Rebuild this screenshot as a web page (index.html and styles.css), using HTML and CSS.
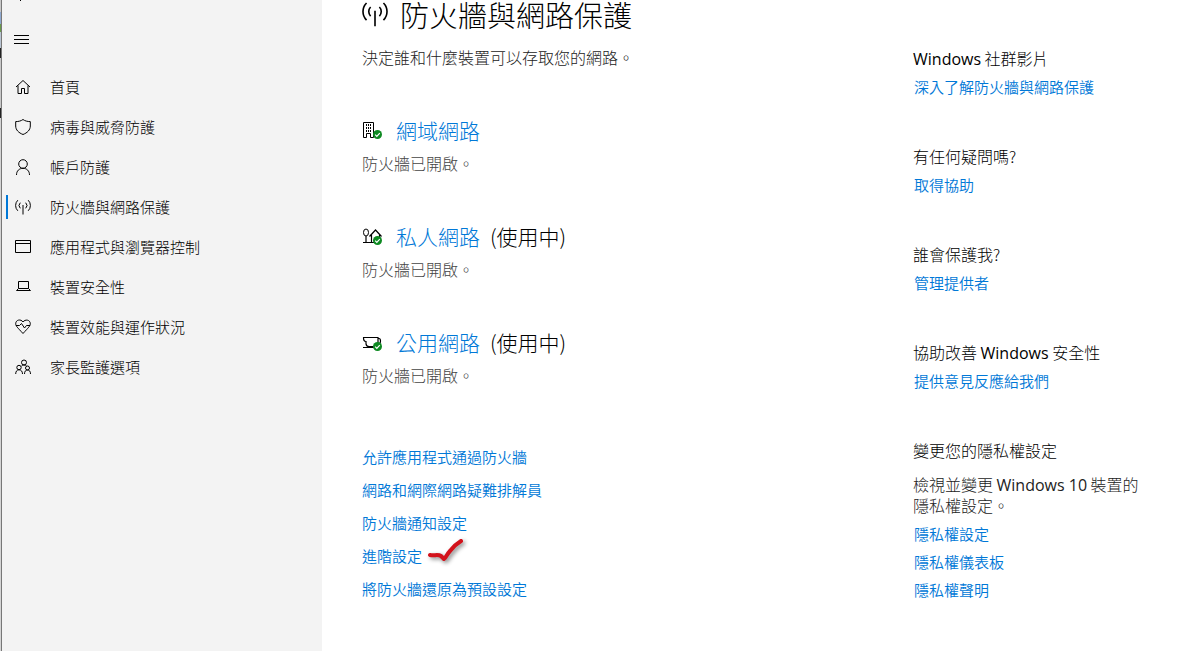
FILE: index.html
```html
<!DOCTYPE html>
<html lang="zh-Hant">
<head>
<meta charset="utf-8">
<title>防火牆與網路保護</title>
<link rel="stylesheet" href="styles.css">
</head>
<body>
<svg width="0" height="0" class="defs" aria-hidden="true">
  <symbol id="signal" viewBox="0 0 16 16"><path d="M8 6v9.500M5.300 3.700a4 4 0 0 0 0 5.600M10.700 3.700a4 4 0 0 1 0 5.600M2.800 1.200a7.500 7.500 0 0 0 0 10.600M13.200 1.200a7.500 7.500 0 0 1 0 10.600"/></symbol>
  <symbol id="ok" viewBox="0 0 9 9"><circle cx="4.500" cy="4.500" r="4.500" fill="#0e8a22" stroke="none"/><path d="M2.200 4.700l1.600 1.600 3-3.200" stroke="#fff" stroke-width="1.200"/></symbol>
</svg>
<div class="app">
  <div class="edge"></div>
  <nav class="sidebar">
    <button class="back" aria-label="返回"><svg width="16" height="16" viewBox="0 0 16 16"><path d="M15 8H1M8 1L1 8l7 7"/></svg></button>
    <button class="menu" aria-label="功能表"><svg width="16" height="16" viewBox="0 0 16 16"><path d="M0 3.500h15M0 7.500h15M0 11.500h15"/></svg></button>
    <ul class="nav">
      <li><a href="#"><svg viewBox="0 0 16 16"><path d="M1 8L8 1.500 15 8M3 6.500v8h3.500V9.500h3v5H13v-8"/></svg>首頁</a></li>
      <li><a href="#"><svg viewBox="0 0 16 16"><path d="M8 .5C6 2 3.500 2.600.7 2.600V7c0 4 3 6.800 7.300 8.500 4.300-1.700 7.300-4.500 7.300-8.500V2.600C12.500 2.600 10 2 8 .5z"/></svg>病毒與威脅防護</a></li>
      <li><a href="#"><svg viewBox="0 0 16 16"><circle cx="8" cy="5" r="4.300"/><path d="M1.500 16c0-4 2.600-6.700 6.500-6.700s6.500 2.700 6.500 6.700"/></svg>帳戶防護</a></li>
      <li class="current"><a href="#" aria-current="page"><svg><use href="#signal"/></svg>防火牆與網路保護</a></li>
      <li><a href="#"><svg viewBox="0 0 16 16"><path d="M.5 1.500h15v12H.5zM.5 4.500h15"/></svg>應用程式與瀏覽器控制</a></li>
      <li><a href="#"><svg viewBox="0 0 16 16"><path d="M3.500 2.500h10v7h-10zM3.500 9.500l-2 2h14l-2-2"/></svg>裝置安全性</a></li>
      <li><a href="#"><svg viewBox="0 0 16 16"><path d="M8 3C6-.2.700.5.700 4.800.700 7 2.500 8.500 8 14.500c5.500-6 7.300-7.500 7.300-9.700C15.300.5 10 0 8 3zM1 6.500h3.500l2-2 3 4.500 2-2.500H15"/></svg>裝置效能與運作狀況</a></li>
      <li><a href="#"><svg viewBox="0 0 16 16"><circle cx="9" cy="3.500" r="2.500"/><circle cx="4" cy="8.500" r="2.200"/><circle cx="12.500" cy="9" r="2"/><path d="M.7 15c0-2.700 1.300-4.200 3.300-4.200S7.500 12.300 7.500 15M9.500 15c0-2.500 1-4 3-4s3 1.500 3 4M6.300 7.300C7 6.300 8 6 9 6s2 .4 2.500 1"/></svg>家長監護選項</a></li>
    </ul>
  </nav>
  <main class="content">
    <h1><svg width="26" height="26"><use href="#signal"/></svg>防火牆與網路保護</h1>
    <p class="intro">決定誰和什麼裝置可以存取您的網路。</p>
    <section class="network">
      <h2><svg width="20" height="20" viewBox="0 0 20 20"><path d="M1.500 17.500v-15h10v15h-3v-4h-4v4z"/><path d="M4.500 4v8M6.500 4v8M8.500 4v8" stroke-dasharray="2 1"/><use href="#ok" x="11" y="10" width="9" height="9"/></svg><a href="#">網域網路</a></h2>
      <p>防火牆已開啟。</p>
    </section>
    <section class="network">
      <h2><svg width="20" height="20" viewBox="0 0 20 20"><ellipse cx="4" cy="6.500" rx="2.500" ry="3.500"/><path d="M4 10v6M1 16.500h10M7.500 10.500L13.500 4l6 6.500M9.500 9v7.500h8V9" stroke-width="1.200"/><use href="#ok" x="11" y="10" width="9" height="9"/></svg><a href="#">私人網路</a><span>(使用中)</span></h2>
      <p>防火牆已開啟。</p>
    </section>
    <section class="network">
      <h2><svg width="20" height="20" viewBox="0 0 20 20"><path d="M1 5.500h15v6c0 2-1 3-3 3H7c-2 0-3-1-3-3v-2C2 9.500 1.500 8 1.500 5.500M16 6.500h1c2 0 2 5 0 5h-1M1 15.500h12" stroke-width="1.200"/><use href="#ok" x="11" y="10" width="9" height="9"/></svg><a href="#">公用網路</a><span>(使用中)</span></h2>
      <p>防火牆已開啟。</p>
    </section>
    <ul class="actions">
      <li><a href="#">允許應用程式通過防火牆</a></li>
      <li><a href="#">網路和網際網路疑難排解員</a></li>
      <li><a href="#">防火牆通知設定</a></li>
      <li class="marked"><a href="#">進階設定</a><svg class="tick" width="40" height="28" viewBox="0 0 40 28"><path d="M3 17c4 1 8-1 11 1l3 3c2-1 3-5 6-8 3-4 6-7 11-10"/></svg></li>
      <li><a href="#">將防火牆還原為預設設定</a></li>
    </ul>
  </main>
  <aside class="help">
    <section><h3><span class="latin">Windows</span> 社群影片</h3><a href="#">深入了解防火牆與網路保護</a></section>
    <section><h3>有任何疑問嗎?</h3><a href="#">取得協助</a></section>
    <section><h3>誰會保護我?</h3><a href="#">管理提供者</a></section>
    <section><h3>協助改善 <span class="latin">Windows</span> 安全性</h3><a href="#">提供意見反應給我們</a></section>
    <section><h3>變更您的隱私權設定</h3><p>檢視並變更 <span class="latin">Windows 10</span> 裝置的隱私權設定。</p><a href="#">隱私權設定</a><a href="#">隱私權儀表板</a><a href="#">隱私權聲明</a></section>
  </aside>
</div>
</body>
</html>
```
FILE: styles.css
```css
* { box-sizing: border-box; }
body {
  margin: 0;
  background: #fff;
  color: #000;
  font: 300 16px/20px "Noto Sans CJK TC", sans-serif;
}
h1, h2, h3, p, ul { margin: 0; padding: 0; font-weight: inherit; }
ul { list-style: none; }
a { color: #0078d7; text-decoration: none; }
svg { flex: none; fill: none; stroke: #000; }
button { display: block; padding: 0; border: 0; background: none; }
.defs { position: absolute; }
.latin { font-family: "Open Sans", sans-serif; font-weight: 400; line-height: 1; }

.app { display: flex; min-height: 100vh; }

.edge {
  flex: none;
  width: 1px;
  background: linear-gradient(#c8c8c8 12px, #8fa9d0 12px 24px, #6a9a4a 24px 32px, #b9c4d2 32px 48px, #222 48px 58px, #c8c8c8 58px 108px, #222 108px 118px, #d4d4d4 118px);
}
.sidebar {
  flex: none;
  width: 321px;
  background: #f3f3f3;
  border-left: 1px solid #777;
}
.back { display: flex; align-items: flex-start; height: 20px; padding-left: 11px; overflow: hidden; }
.back svg { margin-top: -14px; }
.menu { height: 40px; padding-left: 12px; }
.menu svg { display: block; }
.nav { padding-top: 7px; }
.nav a {
  display: flex;
  align-items: center;
  gap: 19px;
  height: 40px;
  padding-left: 13px;
  color: #000;
  font-size: 15px;
}
.nav svg { width: 16px; height: 16px; }
.nav .current { background: linear-gradient(#0078d7, #0078d7) 4px 50% / 2px 24px no-repeat; }

.content { flex: 1; padding-left: 40px; }
h1 { display: flex; align-items: center; gap: 12px; font-size: 29px; line-height: 28px; }
.intro { margin-top: 19px; color: #222; }
.network { margin-top: 48px; }
h2 { display: flex; align-items: center; font-size: 21px; line-height: 30px; }
h2 svg { margin-right: 14px; }
h2 span { margin-left: 10px; }
.network p { margin-top: 8px; color: #444; }
.actions { display: grid; gap: 13px; margin-top: 62px; font-size: 15px; font-weight: 350; }
.marked { display: flex; align-items: center; }
.tick {
  margin: -12px 0 -4px 5px;
  stroke: #d3121b;
  stroke-width: 4;
  stroke-linecap: round;
  stroke-linejoin: round;
  filter: drop-shadow(2px 2px 2px #888);
}

.help { display: grid; align-content: start; gap: 49px; flex: none; width: 278px; padding: 48px 48px 0 0; }
.help section { display: grid; gap: 8px; }
.help h3 { padding-bottom: 1px; font-size: 16px; }
.help p { margin-top: 5px; color: #222; line-height: 21px; }
.help a { padding-left: 1px; font-size: 15px; font-weight: 350; }
```
